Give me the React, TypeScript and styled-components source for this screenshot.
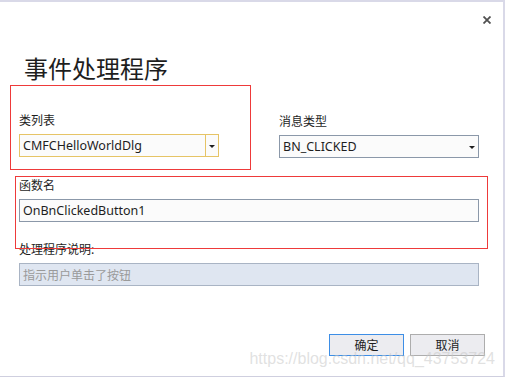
import React from 'react';
import styled, { createGlobalStyle, css } from 'styled-components';

const GlobalStyle = createGlobalStyle`
  html, body {
    margin: 0;
    padding: 0;
    background: #ffffff;
  }
  * {
    box-sizing: border-box;
  }
`;

const CJK = `"Noto Sans CJK SC", "Noto Sans", sans-serif`;
const LATIN = `"Noto Sans", "Noto Sans CJK SC", sans-serif`;

const Window = styled.div`
  position: relative;
  width: 505px;
  height: 377px;
  background: #ffffff;
  border-top: 2px solid #d9d9e8;
  border-right: 2px solid #d9d9e8;
  border-bottom: 1px solid #cfcfdf;
  display: flex;
  flex-direction: column;
  padding: 0 0 0 19px;
  font-family: ${CJK};
  color: #1e1e1e;
  overflow: hidden;
`;

const TopBar = styled.div`
  display: flex;
  justify-content: flex-end;
  padding: 14px 12px 0 0;
  height: 22px;
`;

const CloseButton = styled.div`
  width: 8px;
  height: 8px;
  display: flex;
`;

const Title = styled.h1`
  margin: 29px 0 0 5px;
  font-size: 24px;
  line-height: 30px;
  font-weight: 400;
  font-family: ${CJK};
  color: #1e1e1e;
`;

const FieldRow = styled.div`
  display: grid;
  grid-template-columns: 200px 200px;
  column-gap: 60px;
  margin-top: 27px;
`;

const Field = styled.div<{ $shift?: number }>`
  display: flex;
  flex-direction: column;
  margin-top: ${(p) => p.$shift || 0}px;
`;

const Label = styled.label<{ $gap?: number }>`
  font-size: 12px;
  line-height: 20px;
  height: 20px;
  color: #1e1e1e;
  margin-top: ${(p) => p.$gap || 0}px;
  margin-bottom: 4px;
`;

const boxBase = css`
  height: 23px;
  font-family: ${LATIN};
  font-size: 12.5px;
  line-height: 21px;
  padding: 0 0 0 3px;
  color: #1e1e1e;
`;

const Combo = styled.div<{ $focused?: boolean }>`
  ${boxBase};
  display: flex;
  align-items: stretch;
  background: #fbfbfb;
  border: 1px solid ${(p) => (p.$focused ? '#e6c466' : '#8b98a9')};
`;

const ComboText = styled.span`
  flex: 1;
  white-space: nowrap;
  overflow: hidden;
`;

const ComboArrow = styled.div<{ $split?: boolean }>`
  width: 13px;
  display: flex;
  align-items: center;
  justify-content: center;
  border-left: ${(p) => (p.$split ? '1px solid #e6c466' : 'none')};
`;

const Arrow = styled.span`
  width: 0;
  height: 0;
  border-left: 3px solid transparent;
  border-right: 3px solid transparent;
  border-top: 3px solid #1e1e1e;
  margin-top: 1px;
`;

const TextInput = styled.div<{ $disabled?: boolean }>`
  ${boxBase};
  width: 460px;
  background: ${(p) => (p.$disabled ? '#dfe6f1' : '#fbfbfb')};
  border: 1px solid ${(p) => (p.$disabled ? '#a9b4c4' : '#8b98a9')};
  color: ${(p) => (p.$disabled ? '#9a9a9a' : '#1e1e1e')};
  font-family: ${(p) => (p.$disabled ? CJK : LATIN)};
  font-size: ${(p) => (p.$disabled ? '12px' : '12.5px')};
`;

const ButtonRow = styled.div`
  display: flex;
  justify-content: flex-end;
  gap: 6px;
  padding-right: 18px;
  margin-top: 48px;
`;

const Button = styled.button<{ $primary?: boolean }>`
  width: 75px;
  height: 22px;
  padding: 0;
  background: #ececf0;
  border: 1px solid ${(p) => (p.$primary ? '#3d8ee6' : '#adadad')};
  font-family: ${CJK};
  font-size: 12px;
  line-height: 20px;
  color: #1e1e1e;
`;

const Annotation = styled.div<{ $x: number; $y: number; $w: number; $h: number }>`
  position: absolute;
  left: ${(p) => p.$x}px;
  top: ${(p) => p.$y}px;
  width: ${(p) => p.$w}px;
  height: ${(p) => p.$h}px;
  border: 1px solid #ee3a3a;
  pointer-events: none;
`;

const Watermark = styled.div`
  position: absolute;
  right: 8px;
  top: 347px;
  font-family: "Liberation Sans", Arial, sans-serif;
  font-size: 16px;
  line-height: 20px;
  color: rgba(200, 200, 200, 0.55);
  pointer-events: none;
`;

export default function App() {
  return (
    <>
      <GlobalStyle />
      <Window>
        <TopBar>
          <CloseButton>
            <svg width="8" height="8" viewBox="0 0 8 8">
              <path d="M0.5 0.5 L7.5 7.5 M7.5 0.5 L0.5 7.5" stroke="#505050" strokeWidth="1.8" />
            </svg>
          </CloseButton>
        </TopBar>
        <Title>事件处理程序</Title>
        <FieldRow>
          <Field>
            <Label>类列表</Label>
            <Combo $focused>
              <ComboText>CMFCHelloWorldDlg</ComboText>
              <ComboArrow $split>
                <Arrow />
              </ComboArrow>
            </Combo>
          </Field>
          <Field $shift={1}>
            <Label>消息类型</Label>
            <Combo>
              <ComboText>BN_CLICKED</ComboText>
              <ComboArrow>
                <Arrow />
              </ComboArrow>
            </Combo>
          </Field>
        </FieldRow>
        <Label $gap={17}>函数名</Label>
        <TextInput>OnBnClickedButton1</TextInput>
        <Label $gap={17}>处理程序说明:</Label>
        <TextInput $disabled>指示用户单击了按钮</TextInput>
        <ButtonRow>
          <Button $primary>确定</Button>
          <Button>取消</Button>
        </ButtonRow>
        <Annotation $x={10} $y={83} $w={241} $h={85} />
        <Annotation $x={15} $y={174} $w={473} $h={73} />
        <Watermark>https://blog.csdn.net/qq_43753724</Watermark>
      </Window>
    </>
  );
}
